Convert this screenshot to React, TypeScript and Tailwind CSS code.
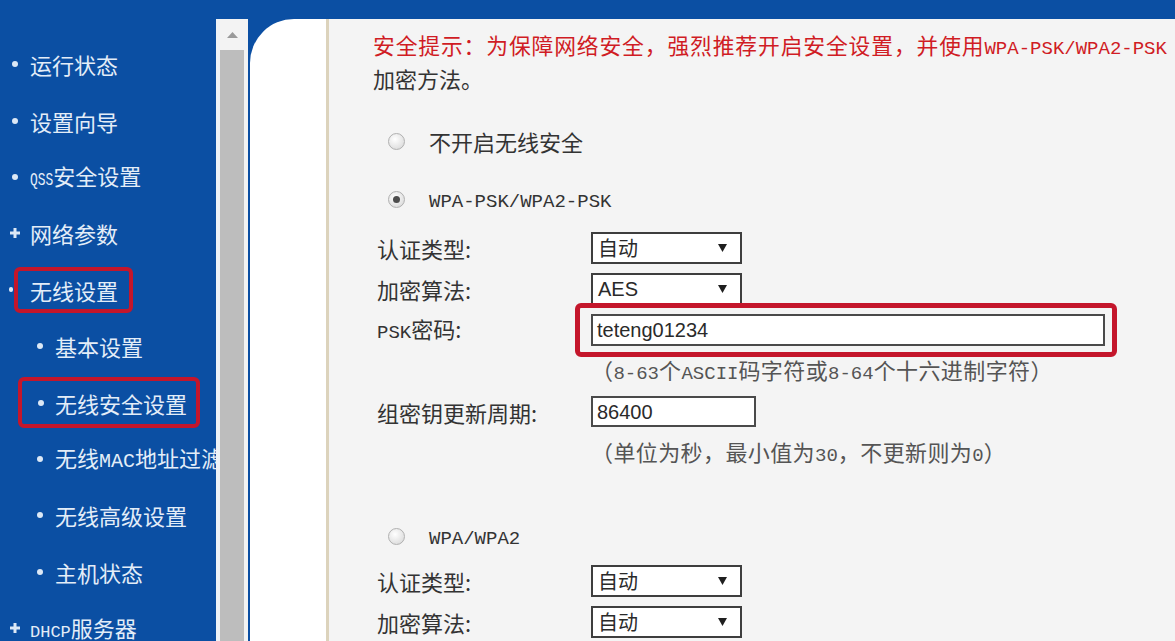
import type { FC, ReactNode } from "react";

// ascii bits in the router page use a narrow bitmap-ish font
const M: FC<{ children: ReactNode; size?: "md" | "lg" | "xl" }> = ({ children, size = "md" }) => (
	<span
		className={
			size === "lg"
				? "font-['Liberation_Mono',monospace] text-[17px] leading-none tracking-normal"
				: size === "xl"
					? "font-['Liberation_Mono',monospace] text-[20px] leading-none tracking-normal"
					: "font-['Liberation_Mono',monospace] text-[19px] leading-none tracking-normal"
		}
	>
		{children}
	</span>
);

// squeezed ascii used for "QSS" in the menu
const Narrow: FC<{ children: ReactNode }> = ({ children }) => (
	<span className="mr-[-11px] inline-block origin-left scale-x-[0.68] font-['Liberation_Mono',monospace] text-[19px] leading-none">
		{children}
	</span>
);

const Dot: FC = () => <span className="h-[6px] w-[6px] shrink-0 rounded-full bg-[#dce8f6]" />;

const Plus: FC = () => (
	<svg width="12" height="12" viewBox="0 0 12 12" className="shrink-0">
		<path d="M6 1v10M1 6h10" stroke="#dce8f6" strokeWidth="3" />
	</svg>
);

type NavItem = { label: ReactNode; level: 0 | 1; mark: "dot" | "plus"; boxed?: boolean };

const navItems: NavItem[] = [
	{ label: "运行状态", level: 0, mark: "dot" },
	{ label: "设置向导", level: 0, mark: "dot" },
	{ label: <><Narrow>QSS</Narrow>安全设置</>, level: 0, mark: "dot" },
	{ label: "网络参数", level: 0, mark: "plus" },
	{ label: "无线设置", level: 0, mark: "dot", boxed: true },
	{ label: "基本设置", level: 1, mark: "dot" },
	{ label: "无线安全设置", level: 1, mark: "dot", boxed: true },
	{ label: <>无线<M size="xl">MAC</M>地址过滤</>, level: 1, mark: "dot" },
	{ label: "无线高级设置", level: 1, mark: "dot" },
	{ label: "主机状态", level: 1, mark: "dot" },
	{ label: <><M size="lg">DHCP</M>服务器</>, level: 0, mark: "plus" },
];

const NavRow: FC<{ item: NavItem }> = ({ item }) => {
	const text = <span className="whitespace-nowrap text-[22px] leading-none text-[#e3edf8]">{item.label}</span>;

	if (item.boxed && item.level === 0) {
		return (
			<div className="flex h-[56.4px] items-center">
				<span className="ml-[9px] h-[5px] w-[4px] rounded-full bg-[#dce8f6]" />
				<div className="ml-px flex h-[46px] items-center rounded-[6px] border-4 border-[#c4162b] pl-[12px] pr-[11px]">
					{text}
				</div>
			</div>
		);
	}
	if (item.boxed) {
		return (
			<div className="flex h-[56.4px] items-center">
				<div className="ml-[18px] flex h-[51px] items-center gap-[11px] rounded-[6px] border-4 border-[#c4162b] pl-[16px] pr-[9px]">
					<Dot />
					{text}
				</div>
			</div>
		);
	}
	return (
		<div className={item.level === 0 ? "flex h-[56.4px] items-center" : "flex h-[56.4px] items-center pl-[25px]"}>
			{item.mark === "plus" ? (
				<span className="ml-[9px] mr-[9px] flex"><Plus /></span>
			) : (
				<span className="ml-[12px] mr-[12px] flex"><Dot /></span>
			)}
			{text}
		</div>
	);
};

const Radio: FC<{ checked?: boolean }> = ({ checked }) => (
	<span className="flex h-[17px] w-[17px] shrink-0 items-center justify-center rounded-full border border-[#b0b0b0] bg-[radial-gradient(circle_at_40%_35%,#ffffff,#d4d4d4)]">
		{checked && <span className="h-[7px] w-[7px] rounded-full bg-[#4d4d4d]" />}
	</span>
);

const Select: FC<{ value: string; latin?: boolean }> = ({ value, latin }) => (
	<div className="flex h-[32px] w-[151px] items-center justify-between border-2 border-[#3e3e3e] bg-white pl-[5px] pr-[13px]">
		<span
			className={
				latin
					? "font-['Liberation_Sans',sans-serif] text-[20px] leading-none text-[#2a2a2a]"
					: "text-[20px] leading-none text-[#2a2a2a]"
			}
		>
			{value}
		</span>
		<svg width="9" height="8" viewBox="0 0 9 8">
			<path d="M0 0h9L4.5 8z" fill="#1f1f1f" />
		</svg>
	</div>
);

const FormRow: FC<{ label: ReactNode; children?: ReactNode }> = ({ label, children }) => (
	<div className="flex h-[41px] items-center">
		<div className="ml-[4px] w-[214px] shrink-0 whitespace-nowrap text-[22px] leading-none text-[#333]">{label}</div>
		{children}
	</div>
);

const RadioRow: FC<{ checked?: boolean; children: ReactNode; className: string }> = ({ checked, children, className }) => (
	<div className={className}>
		<span className="ml-[15px] flex"><Radio checked={checked} /></span>
		<span className="ml-[24px] text-[22px] leading-none text-[#333]">{children}</span>
	</div>
);

const App: FC = () => {
	return (
		<div className="flex h-[641px] w-[1175px] flex-col overflow-hidden bg-[#0b4fa3] font-['Noto_Sans_CJK_SC',sans-serif] [text-spacing-trim:space-all]">
			{/* top frame bar */}
			<div className="h-[19px] shrink-0 bg-[#0b4fa3]" />

			<div className="flex min-h-0 flex-1">
				{/* left menu */}
				<nav className="w-[216px] shrink-0 pt-[17px]">
					{navItems.map((item, i) => (
						<NavRow key={i} item={item} />
					))}
				</nav>

				{/* frame scrollbar */}
				<div className="flex w-[32px] shrink-0 flex-col border-l-4 border-[#eef2f6] bg-[#f3f3f3]">
					<div className="flex h-[31px] items-center justify-center pr-[4px]">
						<svg width="11" height="6" viewBox="0 0 11 6">
							<path d="M0 6L5.5 0L11 6z" fill="#9a9a9a" />
						</svg>
					</div>
					<div className="mr-[4px] flex-1 bg-[#bdbdbd]" />
				</div>

				{/* page */}
				<div className="ml-[2px] flex flex-1 overflow-hidden rounded-tl-[44px] bg-white">
					<div className="w-[76px] shrink-0" />
					<main className="flex-1 border-l-[3px] border-[#dcd3bc] bg-[#f4f4f4] pl-[44px] text-[22px]">
						<div className="pt-[9px]">
							<p className="h-[33px] whitespace-nowrap text-[21.8px] leading-[33px] tracking-[0.85px] text-[#d01c24]">
								安全提示：为保障网络安全，强烈推荐开启安全设置，并使用<M>WPA-PSK/WPA2-PSK</M>
							</p>
							<p className="h-[33px] leading-[35px] text-[#333]">加密方法。</p>
						</div>

						<RadioRow className="mt-[27px] flex h-[40px] items-center">不开启无线安全</RadioRow>
						<RadioRow checked className="mt-[18px] flex h-[40px] items-center">
							<M>WPA-PSK/WPA2-PSK</M>
						</RadioRow>

						<div className="mt-[8px]">
							<FormRow label="认证类型:">
								<Select value="自动" />
							</FormRow>
							<FormRow label="加密算法:">
								<Select value="AES" latin />
							</FormRow>
							<FormRow label={<><M>PSK</M>密码:</>}>
								<div className="-ml-[16px] flex items-center rounded-[6px] border-[5px] border-[#c4162b] pb-[6px] pl-[11px] pr-[7px] pt-[6px]">
									<div className="flex h-[32px] w-[514px] items-center border-2 border-[#4a4a4a] bg-white pl-[4px]">
										<span className="font-['Liberation_Sans',sans-serif] text-[20px] leading-none text-[#2a2a2a]">teteng01234</span>
									</div>
								</div>
							</FormRow>
							<FormRow label="">
								<span className="whitespace-nowrap text-[22px] leading-none tracking-[0.4px] text-[#555]">
									（<M>8-63</M>个<M>ASCII</M>码字符或<M>8-64</M>个十六进制字符）
								</span>
							</FormRow>
							<FormRow label="组密钥更新周期:">
								<div className="flex h-[31px] w-[165px] items-center border-2 border-[#4a4a4a] bg-white pl-[4px]">
									<span className="font-['Liberation_Sans',sans-serif] text-[20px] leading-none text-[#2a2a2a]">86400</span>
								</div>
							</FormRow>
							<FormRow label="">
								<span className="whitespace-nowrap text-[22px] leading-none tracking-[0.4px] text-[#555]">
									（单位为秒，最小值为<M>30</M>，不更新则为<M>0</M>）
								</span>
							</FormRow>
						</div>

						<RadioRow className="mt-[43px] flex h-[40px] items-center">
							<M>WPA/WPA2</M>
						</RadioRow>
						<div className="mt-[4px]">
							<FormRow label="认证类型:">
								<Select value="自动" />
							</FormRow>
							<FormRow label="加密算法:">
								<Select value="自动" />
							</FormRow>
						</div>
					</main>
				</div>
			</div>
		</div>
	);
};

export default App;
